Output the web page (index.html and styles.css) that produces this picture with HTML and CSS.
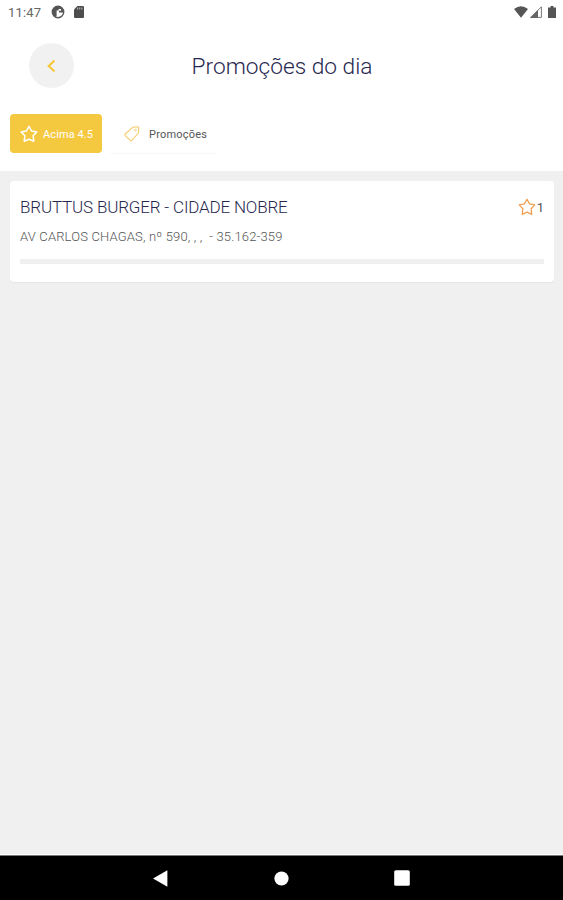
FILE: index.html
```html
<!DOCTYPE html>
<html lang="pt-BR">
<head>
	<meta charset="UTF-8">
	<title>Promoções do dia</title>
	<link rel="stylesheet" href="styles.css">
</head>
<body>
	<div class="wrap">
		<div class="status">
			<span class="time">11:47</span>
			<svg class="ic-app" width="14" height="14" viewBox="0 0 14 14">
				<circle cx="7" cy="7" r="5.7" fill="#fff" stroke="#555" stroke-width="1.4"/>
				<path d="M7 1.3A5.7 5.7 0 0 0 3.6 11.6L5.6 11V5.4h2V4h3.6L10.4 2.4z" fill="#555"/>
				<path d="M8 7.4h4.4L11.6 4H10v1.8H8z" fill="#555"/>
			</svg>
			<svg class="ic-sd" width="10" height="12" viewBox="0 0 10 12">
				<path d="M3.3 0H9q1 0 1 1v10q0 1-1 1H1q-1 0-1-1V3.4z" fill="#4d4d4d"/>
				<path d="M3.6 1.5v2M5.7 1.5v2M7.8 1.5v2" stroke="#ccc" stroke-width=".9"/>
			</svg>
			<div class="right">
				<svg width="14" height="12" viewBox="0 0 14 12"><path d="M0 3Q7-2.4 14 3L7 11.8z" fill="#555"/></svg>
				<svg class="ic-signal" width="12" height="12" viewBox="0 0 12 12">
					<path d="M.8 11.4L11.4.8v10.6z" fill="#fff" stroke="#777" stroke-width="1"/>
					<path d="M0 12l8-8v8z" fill="#666"/>
				</svg>
				<svg class="ic-battery" width="8" height="12" viewBox="0 0 8 12"><path d="M2.5 0h3v1.4H8V12H0V1.4h2.5z" fill="#555"/></svg>
			</div>
		</div>
		<div class="header">
			<a href="#" class="back">
				<svg width="10" height="14" viewBox="0 0 10 14"><path d="M7.5 1.4L1.7 7l5.8 5.6" fill="none" stroke="#f5c738" stroke-width="2.1"/></svg>
			</a>
			<h1>Promoções do dia</h1>
		</div>
		<div class="filters">
			<a href="#" class="filter active">
				<svg width="18" height="18" viewBox="0 0 18 18"><path d="M9 1.3l2.5 4.6 5.3 1-3.7 3.8.7 5.6L9 14.2l-4.8 2.1.7-5.6L1.2 6.9l5.3-1z" fill="none" stroke="#fff" stroke-width="1.5" stroke-linejoin="round"/></svg>
				<span>Acima 4.5</span>
			</a>
			<a href="#" class="filter promo">
				<svg width="16" height="16" viewBox="0 0 16 16">
					<path d="M8.8 1.2l5-.4q1 0 1 1l-.4 5.2-6.6 7.3q-.8.8-1.6 0L1.3 9.6q-.8-.8 0-1.6z" fill="none" stroke="#f4cc6b" stroke-width="1.1" stroke-linejoin="round"/>
					<circle cx="11.4" cy="4.1" r="1" fill="none" stroke="#f4cc6b" stroke-width=".8"/>
				</svg>
				<span>Promoções</span>
			</a>
		</div>
		<div class="content">
			<div class="card">
				<div class="row">
					<h2>BRUTTUS BURGER - CIDADE NOBRE</h2>
					<div class="rate">
						<svg width="18" height="18" viewBox="0 0 18 18"><path d="M9 1.3l2.5 4.6 5.3 1-3.7 3.8.7 5.6L9 14.2l-4.8 2.1.7-5.6L1.2 6.9l5.3-1z" fill="none" stroke="#f0a055" stroke-width="1.3" stroke-linejoin="round"/></svg>
						<span>1</span>
					</div>
				</div>
				<p>AV CARLOS CHAGAS, nº 590, , , &nbsp;- 35.162-359</p>
				<div class="line"></div>
			</div>
		</div>
		<div class="navbar">
			<svg class="nav-back" width="15" height="17" viewBox="0 0 15 17"><path d="M0 8.5L14.4.3v16.4z" fill="#fff"/></svg>
			<svg class="nav-home" width="15" height="15" viewBox="0 0 15 15"><circle cx="7.5" cy="7.5" r="7.1" fill="#fff"/></svg>
			<svg class="nav-recent" width="16" height="16" viewBox="0 0 16 16"><rect x=".2" y=".2" width="15.6" height="15.6" rx="1.6" fill="#fff"/></svg>
		</div>
	</div>
</body>
</html>
```
FILE: styles.css
```css
*{
	margin: 0;
	padding: 0;
	box-sizing: border-box;
}
body{
	font-family: Roboto, "Liberation Sans", sans-serif;
	background-color: #fff;
}
a{
	text-decoration: none;
}
svg{
	display: block;
	flex-shrink: 0;
}
.wrap{
	display: flex;
	flex-direction: column;
	width: 563px;
	height: 900px;
	overflow: hidden;
}
.status{
	display: flex;
	align-items: center;
	height: 24px;
	padding: 0 7px 0 8px;
}
.time{
	width: 43px;
	font-size: 13px;
	letter-spacing: .2px;
	color: #666;
}
.ic-sd{
	margin-left: 9px;
}
.status .right{
	display: flex;
	align-items: center;
	margin-left: auto;
}
.ic-signal{
	margin-left: 2px;
}
.ic-battery{
	margin-left: 6px;
}
.header{
	display: grid;
	grid-template-columns: 45px 1fr 45px;
	align-items: center;
	height: 83px;
	padding: 0 28px 0 29px;
}
.back{
	display: flex;
	align-items: center;
	justify-content: center;
	width: 45px;
	height: 45px;
	border-radius: 50%;
	background-color: #f1f1f1;
}
.header h1{
	padding-top: 1px;
	text-align: center;
	font-size: 22.7px;
	font-weight: 300;
	color: #28284f;
}
.filters{
	display: flex;
	height: 64px;
	padding: 7px 10px 0;
}
.filter{
	display: flex;
	align-items: center;
	height: 39px;
	border-radius: 4px;
	font-size: 11px;
	letter-spacing: .2px;
	color: #555;
}
.filter span{
	padding-top: 2px;
}
.filter.active{
	width: 92px;
	padding-left: 10px;
	gap: 5px;
	background-color: #f5c93f;
	color: #fff;
}
.filter.active span{
	letter-spacing: .1px;
}
.promo{
	width: 108px;
	margin-left: 7px;
	padding-left: 15px;
	gap: 9px;
	box-shadow: 0 1px 1px #f8f8f8;
}
.content{
	flex: 1;
	padding: 10px 9px 10px 10px;
	background-color: #f0f0f0;
	border-bottom: 1px solid #fff;
}
.card{
	height: 101px;
	padding: 16px 10px 0 10px;
	border-radius: 4px;
	background-color: #fff;
	box-shadow: 0 1px 1px #e4e4e4;
}
.row{
	display: flex;
	align-items: center;
	justify-content: space-between;
	height: 20px;
}
.row h2{
	font-size: 17px;
	font-weight: 300;
	letter-spacing: -.17px;
	color: #28284f;
}
.rate{
	display: flex;
	align-items: center;
	gap: 1px;
	font-size: 13px;
	color: #555;
}
.card p{
	margin-top: 12px;
	font-size: 13px;
	font-weight: 300;
	line-height: 16px;
	letter-spacing: .17px;
	color: #555;
}
.line{
	height: 5px;
	margin-top: 14px;
	background-color: #f0f0f0;
}
.navbar{
	display: flex;
	align-items: center;
	height: 45px;
	padding-left: 153px;
	border-top: 1px solid #777;
	background-color: #000;
}
.nav-home{
	margin-left: 106px;
}
.nav-recent{
	margin-left: 105px;
}
```
